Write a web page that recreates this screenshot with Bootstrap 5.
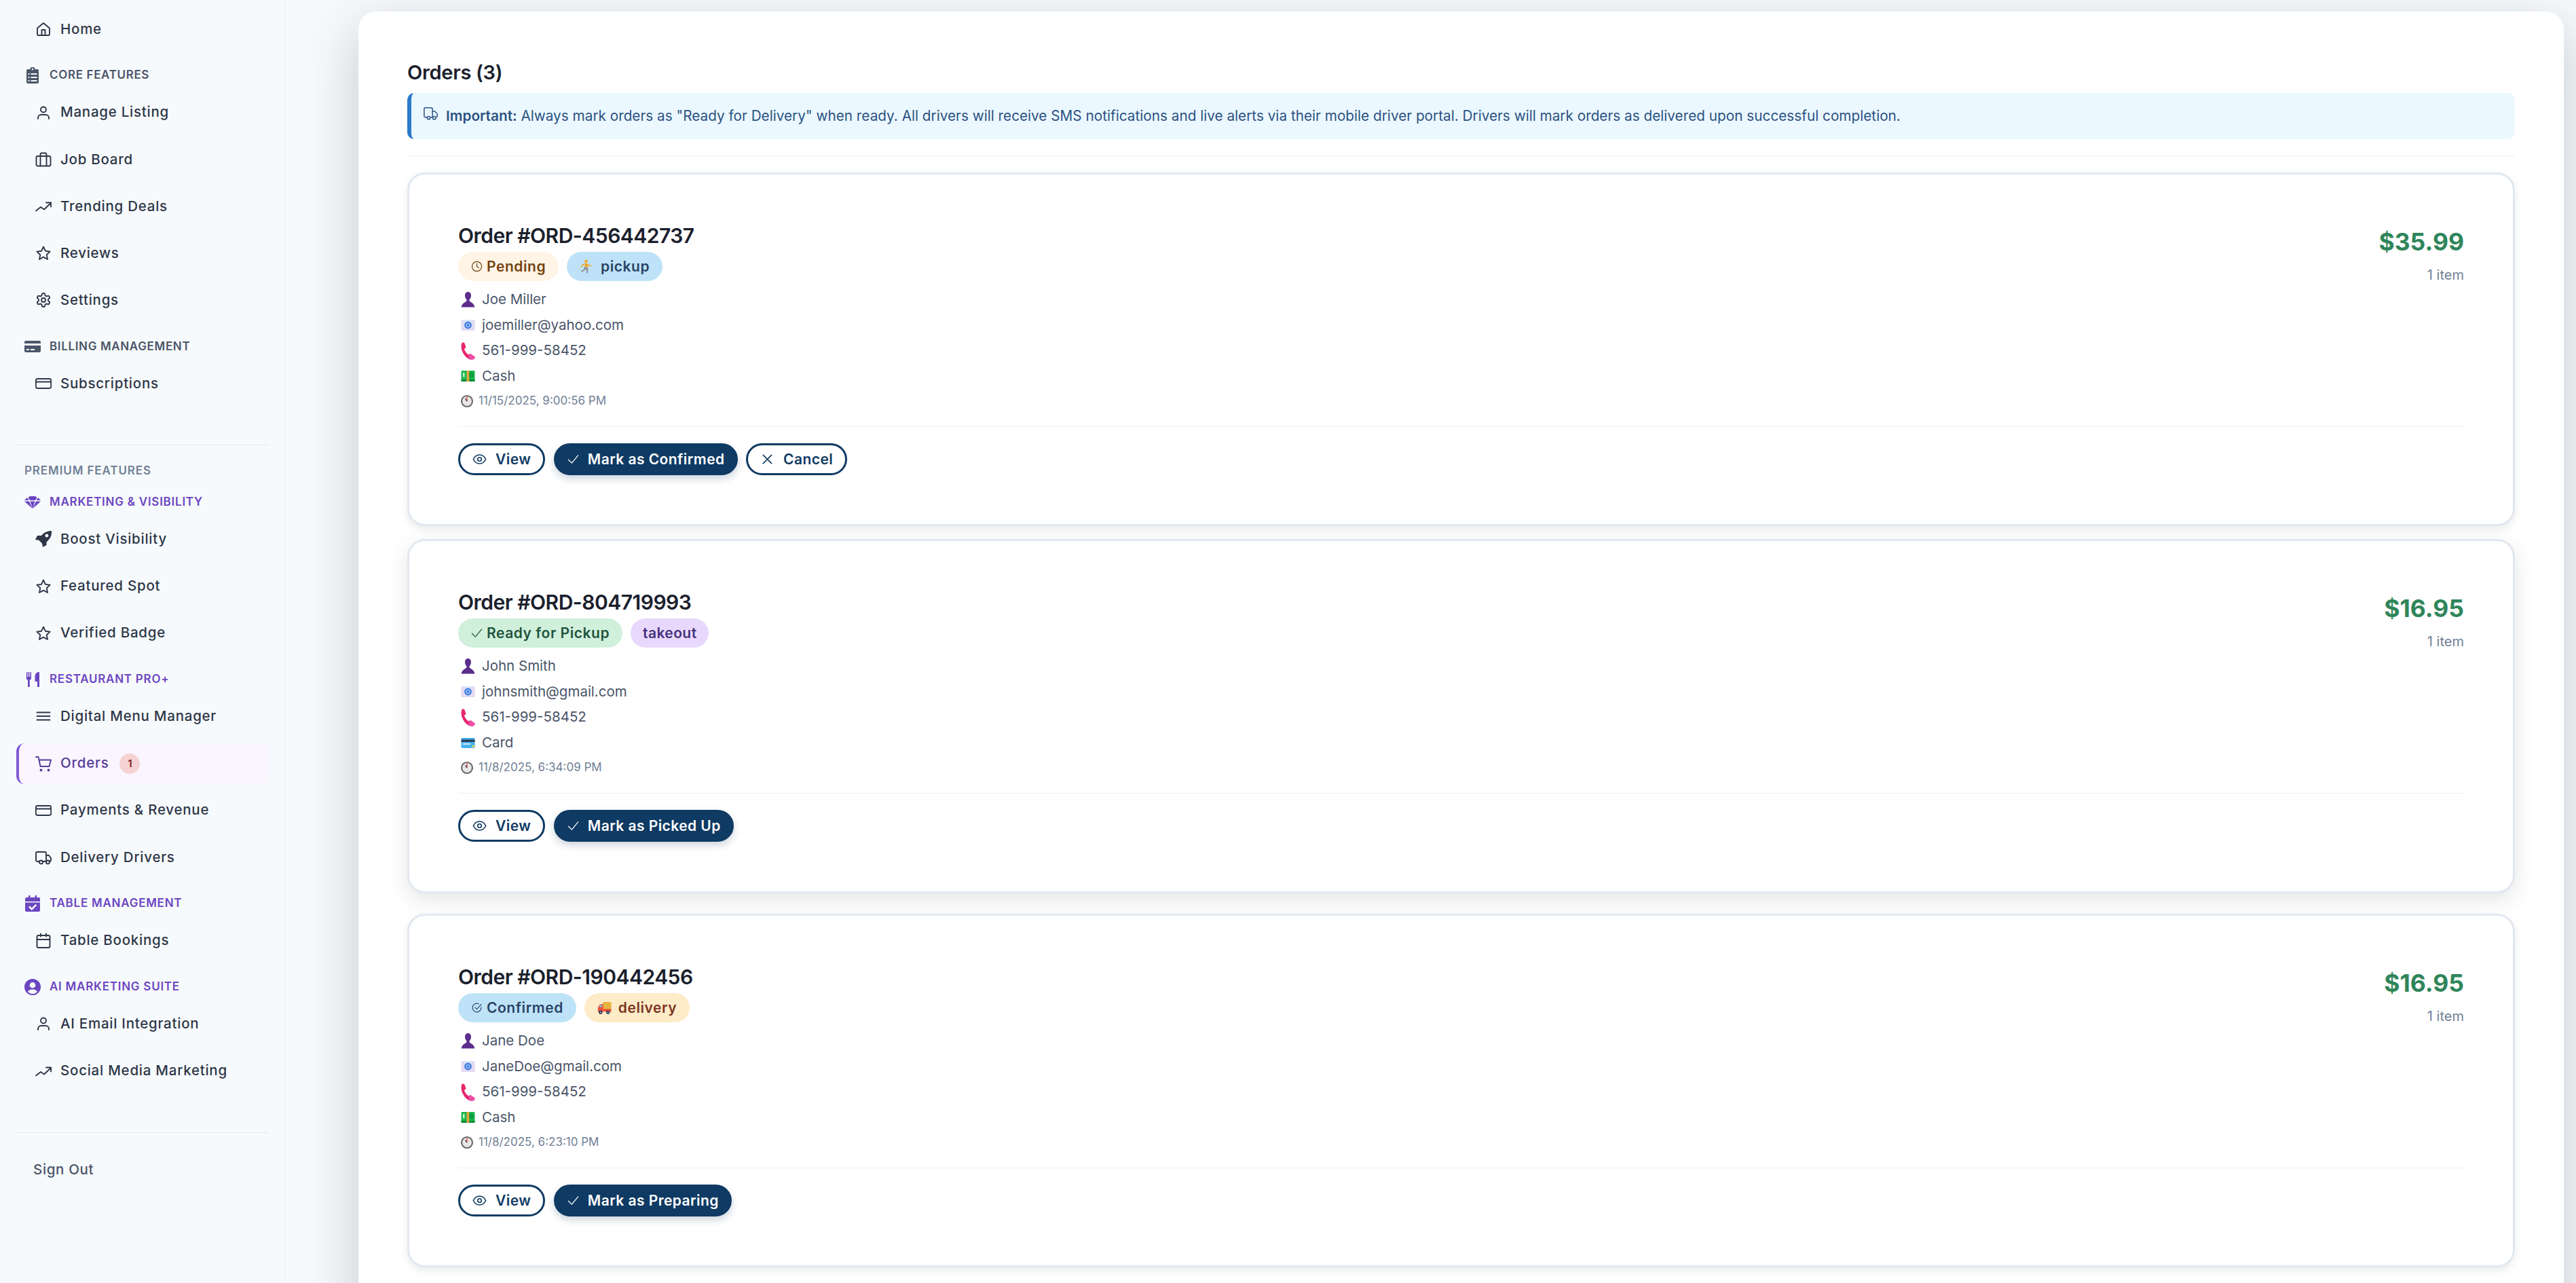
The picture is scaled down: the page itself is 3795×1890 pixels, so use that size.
<!DOCTYPE html>
<html lang="en">
<head>
<meta charset="utf-8">
<title>Orders</title>
<link rel="stylesheet" href="https://cdn.jsdelivr.net/npm/bootstrap@5.3.0/dist/css/bootstrap.min.css">
<style>
html,body{height:100%;overflow:hidden}
body{font-family:Inter,"Liberation Sans",sans-serif;background:#f7fafc;color:#1a202c}
.app-shell{height:1890px;overflow:hidden}
.side-pane{width:420px;flex:none;height:1890px;background:#f7fafc;border-right:1px solid #e8edf3;padding:13px 24px 0;position:relative;z-index:2}
.side-link{height:60px;margin-bottom:9.2px;padding:0 0 0 28px;gap:13px;color:#2d3748;font-size:20.5px;font-weight:500;letter-spacing:.75px;border-radius:12px}
.side-link svg{width:24px;height:24px;flex:none;fill:none;stroke:#2d3748;stroke-width:1.9;stroke-linecap:round;stroke-linejoin:round}
.side-link svg.solid{fill:#2d3748;stroke:none}
.side-link.current{background:#faf5ff;color:#553c9a;border-left:4px solid #805ad5;padding-left:24px}
.side-link.current svg{stroke:#553c9a}
.count-dot{width:30px;height:30px;margin-left:3px;background:#f5d3d3;color:#822727;font-size:14px;font-weight:700;letter-spacing:0}
.sect-head{height:53.5px;padding:4px 0 0 12px;gap:13px;color:#4a5568;font-size:17px;font-weight:600;letter-spacing:.65px;text-transform:uppercase}
.sect-head svg{width:24px;height:24px;flex:none;fill:currentColor}
.sect-head.pro{color:#6b46c1;letter-spacing:.75px}
.side-rule{margin:50.5px 0 0;border:0;border-top:1px solid #e2e8f0;opacity:1}
.side-rule.lower-rule{margin-top:51px}
.prem-label{height:34px;padding-left:12px;margin-top:21px;color:#718096;font-size:17px;font-weight:600;letter-spacing:.9px;text-transform:uppercase}
.out-link{padding-left:25px;margin-top:31px;color:#4a5568;font-size:20.5px;font-weight:500;letter-spacing:.65px}
.main-pane{padding:17px 18px 0 108px;min-width:0}
.sheet{background:#fff;border-radius:26px;padding:72px 72px 0;height:2200px;box-shadow:0 25px 80px rgba(45,55,72,.25)}
.page-title{height:48px;margin:0;font-size:29px;font-weight:600;color:#1a202c;letter-spacing:-.3px;line-height:36px}
.info-note{height:68px;margin:0;padding:0 0 0 18px;gap:12px;background:#ebf8ff;color:#2c5282;border:0;border-left:6px solid #2b7bc9;border-radius:10px;font-size:20.75px}
.info-note svg{width:21px;height:21px;flex:none;margin-top:-8px;fill:none;stroke:#2c5282;stroke-width:1.7;stroke-linecap:round;stroke-linejoin:round}
.info-note b{font-weight:600}
.title-rule{margin:24px 0;border:0;border-top:1px solid #eef0f3;opacity:1}
.order-box{border:3px solid #e2e8f0;border-radius:26px;box-shadow:0 5px 12px rgba(45,55,72,.1);padding:70px 72px 72px;margin-bottom:19px}
.order-box.lifted{padding-bottom:73px;margin-bottom:30px;box-shadow:0 10px 30px rgba(45,55,72,.13)}
.order-name{height:40px;margin:0;font-size:30px;font-weight:600;letter-spacing:-.5px;line-height:40px;color:#1a202c}
.pill-row{margin-top:4px;gap:12px;height:43px}
.tag-pill{height:43px;padding:0 19px;gap:6px;font-size:21px;font-weight:600;letter-spacing:.55px}
.tag-pill svg{width:17px;height:17px;flex:none;fill:none;stroke:currentColor;stroke-width:1.7;stroke-linecap:round;stroke-linejoin:round}
.tag-pill svg.pill-emoji{width:21px;height:21px;stroke:none}
.tag-pill.with-emoji{gap:10px}
.tone-wait{background:#fff4e6;color:#744210}
.tone-blue{background:#bee3f8;color:#2a4365}
.tone-green{background:#d1f0dc;color:#22543d}
.tone-violet{background:#e9d8fd;color:#44337a}
.tone-violet.text-only{padding:0 18px;letter-spacing:.4px}
.tone-amber{background:#feebc8;color:#7b341e}
.info-stack{margin-top:9px}
.info-line{height:37.5px;gap:10px;padding-left:4px;font-size:20.5px;color:#4a5568}
.info-line svg{width:21px;height:28px;flex:none}
.time-line{height:35.5px;gap:7px;padding-left:3px;font-size:17px;color:#718096}
.time-line svg{width:20px;height:24px;flex:none}
.box-rule{margin:19px 0 24.5px;border:0;border-top:1px solid #edf0f4;opacity:1}
.act-row{gap:12.5px}
.act-btn{height:47px;padding:0 18px;gap:13px;border:3px solid #0f3a63;border-radius:24px;font-size:21px;font-weight:600;letter-spacing:.45px;color:#0f3a63;background:#fff;line-height:1}
.act-btn svg{width:21px;height:21px;flex:none;fill:none;stroke:currentColor;stroke-width:1.8;stroke-linecap:round;stroke-linejoin:round}
.act-btn.filled{padding:0 16px 0 17px;background:#0f3a63;color:#fff;box-shadow:0 5px 12px rgba(15,58,99,.22)}
.act-btn.filled svg{width:17px;height:17px}
.money{font-size:35.5px;font-weight:700;color:#2f855a;line-height:44px;margin-top:8px}
.item-qty{font-size:20px;color:#718096;line-height:26px;margin-top:13px}
</style>
</head>
<body>
<svg width="0" height="0" class="d-none" aria-hidden="true">
<defs>
<symbol id="e-person" viewBox="0 0 21 28"><path fill="#5b2d8c" d="M10.5 2C7.6 2 6 4.300 6 7.200c0 2.600.9 4.500 2.200 5.800.4.500.4 1.900 0 2.500C7 17 1.500 18.500.6 24.500h19.800c-.9-6-6.400-7.500-7.600-9-.4-.6-.4-2 0-2.500 1.300-1.300 2.200-3.200 2.200-5.800C15 4.300 13.400 2 10.500 2z"/></symbol>
<symbol id="e-mail" viewBox="0 0 21 28"><rect x=".5" y="6" width="20" height="16" fill="#e4d9f3"/><path d="M.5 6 10.500 15 20.500 6z" fill="#dde3f8"/><circle cx="10.500" cy="14" r="5.400" fill="#3f7ee0"/><circle cx="10.500" cy="14" r="2.600" fill="none" stroke="#dbe8ff" stroke-width="1"/></symbol>
<symbol id="e-phone" viewBox="0 0 21 28"><path fill="#e6266e" d="M2.500 1 5.500 2.500 7.500 9 5 11c.6 3 3.500 7 6.500 8.500L14 18l6.500 4.500-.5 3c-2 1.500-5 1.500-8 .5C5.500 23 .5 14 .5 7.500.5 5 1 2.500 2.500 1z"/><path fill="#ed4fa6" d="M11.500 19.500 14 18l6.500 4.500-.5 3c-2 1.500-5 1.500-8 .5z"/></symbol>
<symbol id="e-cash" viewBox="0 0 21 28"><rect x=".5" y="6" width="20" height="16" rx="1" fill="#19b84c"/><rect x=".5" y="19" width="20" height="3" fill="#0f8a3a"/><circle cx="15" cy="12.500" r="4" fill="#0f9a40"/><rect x="8.500" y="6" width="3.600" height="16" fill="#e8a33d"/><rect x="3" y="9" width="2.500" height="6.500" fill="#bff0cd"/></symbol>
<symbol id="e-card" viewBox="0 0 21 28"><rect x=".5" y="7" width="20" height="15" rx="1.500" fill="#45b2ee"/><rect x=".5" y="9.500" width="20" height="3.500" fill="#2b3f58"/><rect x="3" y="15" width="11" height="2" fill="#d6e8f5"/><rect x="16.500" y="18" width="3" height="3" fill="#f1d23f"/></symbol>
<symbol id="e-clock" viewBox="0 0 20 24"><circle cx="10" cy="12" r="8" fill="#e8e6e6" stroke="#6e6a6c" stroke-width="2.200"/><path d="M10 12V5.500" stroke="#d33" stroke-width="1.300"/><path d="M10 12 7.500 8.500" stroke="#444" stroke-width="1.300"/></symbol>
<symbol id="e-run" viewBox="0 0 22 22"><circle cx="10" cy="3" r="2.500" fill="#f4a62a"/><path d="M9 5.500 14 8l4.500 1.500-.4 1.400L13 9.800l-.5 3-5-1.400L9 5.500z" fill="#f4a62a"/><path d="M8 8 4 10l-1.500 3-1.200-.5L3 8.500 8 6z" fill="#f4a62a"/><path d="M7.500 11.500 12.500 13l.5 4-1 4.500h-1.600l.3-4.500-2-2-2.500 3.500-4 .5-.3-1.400 3.500-.8z" fill="#8a8f9c"/></symbol>
<symbol id="e-truck" viewBox="0 0 22 22"><rect x="8.500" y="2" width="13" height="13" rx="1" fill="#e8b23f"/><path d="M1 10.500 4 5.500h5V17H1z" fill="#f0503c"/><path d="M2.500 10 4.500 6.500H7V10z" fill="#6ec6f0"/><rect x="1" y="13" width="20.500" height="4" fill="#ee4f35"/><circle cx="5" cy="18" r="2.800" fill="#2c3550"/><circle cx="16.500" cy="18" r="2.800" fill="#2c3550"/><circle cx="5" cy="18" r="1" fill="#c7cedb"/><circle cx="16.500" cy="18" r="1" fill="#c7cedb"/></symbol>
<symbol id="i-star" viewBox="0 0 24 24"><path d="M12 2.500l2.900 6.200 6.800.9-5 4.700 1.300 6.700-6-3.300-6 3.300 1.300-6.700-5-4.700 6.800-.9z"/></symbol>
<symbol id="i-user" viewBox="0 0 24 24"><circle cx="12" cy="7.500" r="4"/><path d="M4 21v-1.500A4.500 4.500 0 0 1 8.500 15h7a4.500 4.500 0 0 1 4.500 4.500V21"/></symbol>
<symbol id="i-trend" viewBox="0 0 24 24"><path d="M1 18.500 8 13l5 3.500L23 7"/><path d="M16 6.500h7v6"/></symbol>
<symbol id="i-card" viewBox="0 0 24 24"><rect x=".8" y="5" width="22.400" height="14" rx="2.500"/><path d="M.8 9.500h22.400"/></symbol>
<symbol id="i-eye" viewBox="0 0 24 24"><path d="M1.500 12C4 7 8 4.500 12 4.500S20 7 22.500 12C20 17 16 19.500 12 19.500S4 17 1.500 12z"/><circle cx="12" cy="12" r="3.200"/></symbol>
<symbol id="i-check" viewBox="0 0 24 24"><path d="M2 13l7 7L22 4"/></symbol>
</defs>
</svg>
<div class="app-shell d-flex">
<aside class="side-pane">
<nav class="nav flex-column flex-nowrap">
<a class="side-link nav-link d-flex align-items-center" href="#"><svg viewBox="0 0 24 24"><path d="M3 10.500 12 3l9 7.500V19a2 2 0 0 1-2 2H5a2 2 0 0 1-2-2z"/><path d="M9.500 21v-8h5v8"/></svg>Home</a>
<div class="sect-head d-flex align-items-center"><svg viewBox="0 0 24 24"><path fill-rule="evenodd" d="M5 3h3.500a3.500 3.500 0 0 1 7 0H19a2 2 0 0 1 2 2v17a2 2 0 0 1-2 2H5a2 2 0 0 1-2-2V5a2 2 0 0 1 2-2zm7-1.300A1.300 1.300 0 1 0 12 4.300 1.300 1.300 0 0 0 12 1.700zM5.500 9v2h2V9zm4 0v2h9V9zm-4 5v2h2v-2zm4 0v2h9v-2zm-4 5v2h2v-2zm4 0v2h9v-2z"/></svg>Core Features</div>
<a class="side-link nav-link d-flex align-items-center" href="#"><svg><use href="#i-user"/></svg>Manage Listing</a>
<a class="side-link nav-link d-flex align-items-center" href="#"><svg viewBox="0 0 24 24"><rect x="1.500" y="7" width="21" height="14.500" rx="2"/><path d="M7.500 7v14.500M16.500 7v14.500M7.500 7V4.500a2 2 0 0 1 2-2h5a2 2 0 0 1 2 2V7"/></svg>Job Board</a>
<a class="side-link nav-link d-flex align-items-center" href="#"><svg><use href="#i-trend"/></svg>Trending Deals</a>
<a class="side-link nav-link d-flex align-items-center" href="#"><svg><use href="#i-star"/></svg>Reviews</a>
<a class="side-link nav-link d-flex align-items-center" href="#"><svg viewBox="0 0 24 24"><path d="M12.220 2h-.44a2 2 0 0 0-2 2v.18a2 2 0 0 1-1 1.730l-.43.250a2 2 0 0 1-2 0l-.15-.08a2 2 0 0 0-2.730.730l-.22.380a2 2 0 0 0 .730 2.730l.15.100a2 2 0 0 1 1 1.720v.510a2 2 0 0 1-1 1.740l-.15.090a2 2 0 0 0-.730 2.730l.22.380a2 2 0 0 0 2.730.730l.15-.08a2 2 0 0 1 2 0l.43.250a2 2 0 0 1 1 1.730V20a2 2 0 0 0 2 2h.44a2 2 0 0 0 2-2v-.18a2 2 0 0 1 1-1.730l.43-.250a2 2 0 0 1 2 0l.15.08a2 2 0 0 0 2.730-.730l.22-.390a2 2 0 0 0-.730-2.730l-.15-.08a2 2 0 0 1-1-1.740v-.5a2 2 0 0 1 1-1.740l.15-.090a2 2 0 0 0 .730-2.730l-.22-.380a2 2 0 0 0-2.730-.730l-.15.08a2 2 0 0 1-2 0l-.43-.250a2 2 0 0 1-1-1.730V4a2 2 0 0 0-2-2z"/><circle cx="12" cy="12" r="3"/></svg>Settings</a>
<div class="sect-head d-flex align-items-center"><svg viewBox="0 0 24 24"><path d="M2 4h20a2 2 0 0 1 2 2v2H0V6a2 2 0 0 1 2-2zM0 11h24v8a2 2 0 0 1-2 2H2a2 2 0 0 1-2-2zm3 5v2h4v-2zm6 0v2h6v-2z" fill-rule="evenodd"/></svg>Billing Management</div>
<a class="side-link nav-link d-flex align-items-center" href="#"><svg><use href="#i-card"/></svg>Subscriptions</a>
<hr class="side-rule">
<div class="prem-label d-flex align-items-center">Premium Features</div>
<div class="sect-head pro d-flex align-items-center"><svg viewBox="0 0 24 24"><path fill-rule="evenodd" d="M7.500 3h9l2 3-3 3h-7l-3-3zM4 5l2.500 4H0zM20 5l4 4h-6.500zM0 10.500h7L11.500 21zM8.500 10.500h7L12 21.500zM17 10.500h7L12.500 21z"/></svg>Marketing &amp; Visibility</div>
<a class="side-link nav-link d-flex align-items-center" href="#"><svg class="solid" viewBox="0 0 24 24"><path fill-rule="evenodd" d="M24 0c.5 7-2 12-7.500 16.500V21L11 24l-1-5.500L5.500 14 0 13l3-6h6C13 2 18 0 24 0zM17 4.500a2.500 2.500 0 1 0 0 5 2.500 2.500 0 0 0 0-5z"/></svg>Boost Visibility</a>
<a class="side-link nav-link d-flex align-items-center" href="#"><svg><use href="#i-star"/></svg>Featured Spot</a>
<a class="side-link nav-link d-flex align-items-center" href="#"><svg><use href="#i-star"/></svg>Verified Badge</a>
<div class="sect-head pro d-flex align-items-center"><svg viewBox="0 0 24 24"><path d="M3 1h1.500v7h1.200V1h1.600v7h1.200V1H10v9c0 1.500-1 2.500-2.200 2.800V23H5v-10.200C3.800 12.500 2.800 11.500 2.800 10zM20.500 1H22v22h-3v-8h-3.500V8c0-4 2-6.500 5-7z"/></svg>Restaurant Pro+</div>
<a class="side-link nav-link d-flex align-items-center" href="#"><svg viewBox="0 0 24 24"><path d="M2.500 6.500h19M2.500 12h19M2.500 17.500h19"/></svg>Digital Menu Manager</a>
<a class="side-link current nav-link d-flex align-items-center" href="#"><svg viewBox="0 0 24 24"><path d="M1 2h3.500l3 14h13l2.500-9.500H5.500"/><circle cx="8.500" cy="21.500" r="1" fill="#553c9a"/><circle cx="19.500" cy="21.500" r="1" fill="#553c9a"/></svg>Orders<span class="count-dot rounded-circle d-flex align-items-center justify-content-center">1</span></a>
<a class="side-link nav-link d-flex align-items-center" href="#"><svg><use href="#i-card"/></svg>Payments &amp; Revenue</a>
<a class="side-link nav-link d-flex align-items-center" href="#"><svg viewBox="0 0 24 24"><path d="M6 18H3a2 2 0 0 1-2-2V6a2 2 0 0 1 2-2h11a2 2 0 0 1 2 2v12h-5"/><path d="M16 9h4l3 4v3a2 2 0 0 1-2 2"/><circle cx="8.500" cy="19" r="2.500"/><circle cx="18.500" cy="19" r="2.500"/></svg>Delivery Drivers</a>
<div class="sect-head pro d-flex align-items-center"><svg viewBox="0 0 24 24"><path fill-rule="evenodd" d="M6 0h2.500v3h7V0H18v3h3a2 2 0 0 1 2 2v4H1V5a2 2 0 0 1 2-2h3zM1 10.500h22V22a2 2 0 0 1-2 2H3a2 2 0 0 1-2-2zm15.500 2.500L10.800 18.500 7.800 15.500 6 17.300l4.800 4.700L18.300 14.800z"/></svg>Table Management</div>
<a class="side-link nav-link d-flex align-items-center" href="#"><svg viewBox="0 0 24 24"><rect x="2.500" y="4" width="19" height="18" rx="2"/><path d="M2.500 10h19M8 1.500v4M16 1.500v4"/></svg>Table Bookings</a>
<div class="sect-head pro d-flex align-items-center"><svg viewBox="0 0 24 24"><path fill-rule="evenodd" d="M12 0a12 12 0 1 1 0 24 12 12 0 0 1 0-24zm0 5a4.300 4.300 0 1 0 0 8.600A4.300 4.300 0 0 0 12 5zm0 10.500c-3 0-5.500 1.200-7 3.200 1.600 2 4.200 3.300 7 3.300s5.400-1.300 7-3.300c-1.500-2-4-3.200-7-3.200z"/></svg>AI Marketing Suite</div>
<a class="side-link nav-link d-flex align-items-center" href="#"><svg><use href="#i-user"/></svg>AI Email Integration</a>
<a class="side-link nav-link d-flex align-items-center" href="#"><svg><use href="#i-trend"/></svg>Social Media Marketing</a>
<hr class="side-rule lower-rule">
<a class="out-link nav-link" href="#">Sign Out</a>
</nav>
</aside>
<main class="main-pane flex-grow-1">
<section class="sheet">
<h1 class="page-title">Orders (3)</h1>
<div class="info-note alert d-flex align-items-center" role="alert"><svg viewBox="0 0 24 24"><path d="M6 18H3a2 2 0 0 1-2-2V4a2 2 0 0 1 2-2h10a2 2 0 0 1 2 2v14h-4"/><path d="M15 8h4l4 4v4a2 2 0 0 1-2 2"/><circle cx="8.500" cy="19" r="2.500"/><circle cx="18" cy="19" r="2.500"/></svg><span><b>Important:</b> Always mark orders as "Ready for Delivery" when ready. All drivers will receive SMS notifications and live alerts via their mobile driver portal. Drivers will mark orders as delivered upon successful completion.</span></div>
<hr class="title-rule">

<article class="order-box card">
<div class="d-flex justify-content-between">
<div>
<h2 class="order-name">Order #ORD-456442737</h2>
<div class="pill-row d-flex"><span class="tag-pill tone-wait badge rounded-pill d-inline-flex align-items-center"><svg viewBox="0 0 24 24"><circle cx="12" cy="12" r="10"/><path d="M12 6v6l4 3"/></svg>Pending</span><span class="tag-pill with-emoji tone-blue badge rounded-pill d-inline-flex align-items-center"><svg class="pill-emoji"><use href="#e-run"/></svg>pickup</span></div>
<div class="info-stack">
<div class="info-line d-flex align-items-center"><svg><use href="#e-person"/></svg>Joe Miller</div>
<div class="info-line d-flex align-items-center"><svg><use href="#e-mail"/></svg>joemiller@yahoo.com</div>
<div class="info-line d-flex align-items-center"><svg><use href="#e-phone"/></svg>561-999-58452</div>
<div class="info-line d-flex align-items-center"><svg><use href="#e-cash"/></svg>Cash</div>
<div class="time-line d-flex align-items-center"><svg><use href="#e-clock"/></svg>11/15/2025, 9:00:56 PM</div>
</div>
</div>
<div class="text-end"><div class="money">$35.99</div><div class="item-qty">1 item</div></div>
</div>
<hr class="box-rule">
<div class="act-row d-flex">
<button class="act-btn btn d-inline-flex align-items-center" type="button"><svg><use href="#i-eye"/></svg>View</button>
<button class="act-btn filled btn d-inline-flex align-items-center" type="button"><svg><use href="#i-check"/></svg>Mark as Confirmed</button>
<button class="act-btn btn d-inline-flex align-items-center" type="button"><svg viewBox="0 0 24 24"><path d="M5 5l14 14M19 5 5 19"/></svg>Cancel</button>
</div>
</article>

<article class="order-box lifted card">
<div class="d-flex justify-content-between">
<div>
<h2 class="order-name">Order #ORD-804719993</h2>
<div class="pill-row d-flex"><span class="tag-pill tone-green badge rounded-pill d-inline-flex align-items-center"><svg><use href="#i-check"/></svg>Ready for Pickup</span><span class="tag-pill tone-violet text-only badge rounded-pill d-inline-flex align-items-center">takeout</span></div>
<div class="info-stack">
<div class="info-line d-flex align-items-center"><svg><use href="#e-person"/></svg>John Smith</div>
<div class="info-line d-flex align-items-center"><svg><use href="#e-mail"/></svg>johnsmith@gmail.com</div>
<div class="info-line d-flex align-items-center"><svg><use href="#e-phone"/></svg>561-999-58452</div>
<div class="info-line d-flex align-items-center"><svg><use href="#e-card"/></svg>Card</div>
<div class="time-line d-flex align-items-center"><svg><use href="#e-clock"/></svg>11/8/2025, 6:34:09 PM</div>
</div>
</div>
<div class="text-end"><div class="money">$16.95</div><div class="item-qty">1 item</div></div>
</div>
<hr class="box-rule">
<div class="act-row d-flex">
<button class="act-btn btn d-inline-flex align-items-center" type="button"><svg><use href="#i-eye"/></svg>View</button>
<button class="act-btn filled btn d-inline-flex align-items-center" type="button"><svg><use href="#i-check"/></svg>Mark as Picked Up</button>
</div>
</article>

<article class="order-box card">
<div class="d-flex justify-content-between">
<div>
<h2 class="order-name">Order #ORD-190442456</h2>
<div class="pill-row d-flex"><span class="tag-pill tone-blue badge rounded-pill d-inline-flex align-items-center"><svg viewBox="0 0 24 24"><path d="M21 11v1a9 9 0 1 1-5.300-8.200"/><path d="M8.500 11.500l3.500 3.500 9-10"/></svg>Confirmed</span><span class="tag-pill with-emoji tone-amber badge rounded-pill d-inline-flex align-items-center"><svg class="pill-emoji"><use href="#e-truck"/></svg>delivery</span></div>
<div class="info-stack">
<div class="info-line d-flex align-items-center"><svg><use href="#e-person"/></svg>Jane Doe</div>
<div class="info-line d-flex align-items-center"><svg><use href="#e-mail"/></svg>JaneDoe@gmail.com</div>
<div class="info-line d-flex align-items-center"><svg><use href="#e-phone"/></svg>561-999-58452</div>
<div class="info-line d-flex align-items-center"><svg><use href="#e-cash"/></svg>Cash</div>
<div class="time-line d-flex align-items-center"><svg><use href="#e-clock"/></svg>11/8/2025, 6:23:10 PM</div>
</div>
</div>
<div class="text-end"><div class="money">$16.95</div><div class="item-qty">1 item</div></div>
</div>
<hr class="box-rule">
<div class="act-row d-flex">
<button class="act-btn btn d-inline-flex align-items-center" type="button"><svg><use href="#i-eye"/></svg>View</button>
<button class="act-btn filled btn d-inline-flex align-items-center" type="button"><svg><use href="#i-check"/></svg>Mark as Preparing</button>
</div>
</article>
</section>
</main>
</div>
<script src="https://cdn.jsdelivr.net/npm/bootstrap@5.3.0/dist/js/bootstrap.bundle.min.js"></script>
</body>
</html>
